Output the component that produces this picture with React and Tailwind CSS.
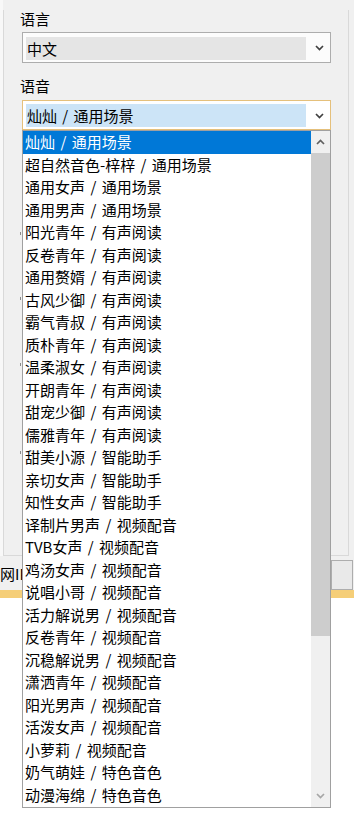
import React from "react";

const items = [
  ["灿灿", "通用场景"],
  ["超自然音色-梓梓", "通用场景"],
  ["通用女声", "通用场景"],
  ["通用男声", "通用场景"],
  ["阳光青年", "有声阅读"],
  ["反卷青年", "有声阅读"],
  ["通用赘婿", "有声阅读"],
  ["古风少御", "有声阅读"],
  ["霸气青叔", "有声阅读"],
  ["质朴青年", "有声阅读"],
  ["温柔淑女", "有声阅读"],
  ["开朗青年", "有声阅读"],
  ["甜宠少御", "有声阅读"],
  ["儒雅青年", "有声阅读"],
  ["甜美小源", "智能助手"],
  ["亲切女声", "智能助手"],
  ["知性女声", "智能助手"],
  ["译制片男声", "视频配音"],
  ["TVB女声", "视频配音"],
  ["鸡汤女声", "视频配音"],
  ["说唱小哥", "视频配音"],
  ["活力解说男", "视频配音"],
  ["反卷青年", "视频配音"],
  ["沉稳解说男", "视频配音"],
  ["潇洒青年", "视频配音"],
  ["阳光男声", "视频配音"],
  ["活泼女声", "视频配音"],
  ["小萝莉", "视频配音"],
  ["奶气萌娃", "特色音色"],
  ["动漫海绵", "特色音色"],
];

function Chevron({ up = false, color = "#404040" }) {
  return (
    <svg width="9" height="6" viewBox="0 0 9 6" className="block">
      <polyline
        points={up ? "1,5 4.5,1.5 8,5" : "1,1 4.5,4.5 8,1"}
        fill="none"
        stroke={color}
        strokeWidth="1.7"
      />
    </svg>
  );
}

export default function App() {
  return (
    <div className="relative w-[354px] h-[819px] overflow-hidden bg-white text-black font-['Noto_Sans_CJK_SC',sans-serif]">
      <div className="flex h-[590px] flex-col bg-[#f0f0f0]">
        <div className="flex h-[556px]">
          <div className="w-[3px] bg-[#f8f8f8]" />
          <div className="mt-[10px] flex h-[546px] w-[346px] flex-col border-x border-b border-[#d9d9d9] pl-[18px]">
            <div className="-ml-[2px] h-[18px] text-[15px] leading-[18px]">语言</div>
            <div className="mt-[4px] flex h-[31px] w-[309px] items-start border border-[#adadad] bg-[#fcfcfc] pl-[3px] pr-[6px] pt-[4px]">
              <div className="h-[23px] w-[280px] bg-[#e5e5e5] pl-[1px] text-[15px] leading-[23px]">中文</div>
              <div className="ml-auto mt-[8px]">
                <Chevron />
              </div>
            </div>
            <div className="-ml-[2px] mt-[14px] h-[18px] text-[15px] leading-[18px]">语音</div>
            <div className="mt-[5px] flex h-[30px] w-[309px] items-start border border-[#e5c07b] bg-white pl-[3px] pr-[6px] pt-[3px]">
              <div className="h-[23px] w-[280px] bg-[#cce4f7] pl-[1px] text-[15px] leading-[23px] [word-spacing:2px]">灿灿 / 通用场景</div>
              <div className="ml-auto mt-[9px]">
                <Chevron />
              </div>
            </div>
            <div className="-ml-[2px] mt-[102px] h-[3px] w-[1px] bg-[#8a8a8a]" />
            <div className="-ml-[2px] mt-[62px] h-[3px] w-[1px] bg-[#8a8a8a]" />
            <div className="-ml-[2px] mt-[63px] h-[3px] w-[1px] bg-[#8a8a8a]" />
            <div className="-ml-[2px] mt-[85px] h-[3px] w-[1px] bg-[#8a8a8a]" />
          </div>
        </div>
        <div className="flex flex-1 items-start justify-between">
          <span className="mt-[9px] h-[18px] text-[15px] leading-[18px]">网IP</span>
          <div className="mr-[1px] mt-[4px] h-[30px] w-[22px] border border-[#adadad] bg-[#e9e9e9]" />
        </div>
      </div>
      <div className="h-[8px] bg-[#f5ce78]" />

      <div className="absolute left-[22px] top-[130px] flex h-[678px] w-[309px] border border-[#a0a0a0] bg-white">
        <div className="flex w-[288px] flex-col">
          {items.map(([a, b], i) => (
            <div
              key={i}
              className={
                i === 0
                  ? "h-[22.5px] whitespace-nowrap bg-[#0078d7] pl-[2px] text-[15px] leading-[22.5px] text-white [word-spacing:2px]"
                  : "h-[22.5px] whitespace-nowrap pl-[2px] text-[15px] leading-[22.5px] text-black [word-spacing:2px]"
              }
            >
              {a} / {b}
            </div>
          ))}
        </div>
        <div className="flex w-[19px] flex-col bg-[#f0f0f0]">
          <div className="flex h-[22px] items-center justify-center">
            <Chevron up color="#606060" />
          </div>
          <div className="h-[483px] bg-[#cdcdcd]" />
          <div className="flex-1" />
          <div className="flex h-[22px] items-center justify-center">
            <Chevron color="#a6a6a6" />
          </div>
        </div>
      </div>
    </div>
  );
}
